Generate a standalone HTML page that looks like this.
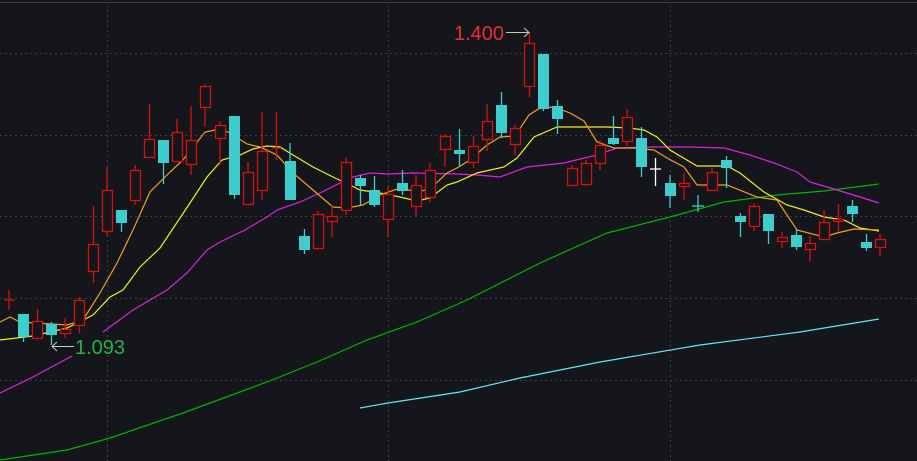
<!DOCTYPE html>
<html><head><meta charset="utf-8"><style>
html,body{margin:0;padding:0;background:#14161b;}
svg{display:block}
</style></head><body>
<svg width="917" height="461" viewBox="0 0 917 461" xmlns="http://www.w3.org/2000/svg">
<rect width="917" height="461" fill="#14161b"/>
<line x1="0" y1="2.5" x2="917" y2="2.5" stroke="#3a3d43" stroke-width="1"/>
<g stroke="#3a3d44" stroke-width="1" stroke-dasharray="2,3">
<line x1="0" y1="53.5" x2="917" y2="53.5"/>
<line x1="0" y1="135.5" x2="917" y2="135.5"/>
<line x1="0" y1="216.5" x2="917" y2="216.5"/>
<line x1="0" y1="298.5" x2="917" y2="298.5"/>
<line x1="0" y1="380.5" x2="917" y2="380.5"/>
<line x1="107.5" y1="5" x2="107.5" y2="461"/>
<line x1="388.5" y1="5" x2="388.5" y2="461"/>
<line x1="670.5" y1="5" x2="670.5" y2="461"/>
</g>
<!-- MA lines -->
<g fill="none" stroke-width="1.2">
<polyline stroke="#00b400" points="0,460 67,450 110,438 183,413 267,382 317,362 367,340 417,322 467,300 540,263 607,233 670,217 724,202 777,195 824,191 879,184"/>
<polyline stroke="#5fe8f0" points="360,408 388,403 460,392 520,378 600,362 700,345 800,332 879,319"/>
<polyline stroke="#e020e0" points="0,393 33,377 72,356"/>
<polyline stroke="#e020e0" points="103,332 133,310 167,290 187,273 207,250 220,242 245,230 267,217 277,210 300,202 320,193 340,183 353,177 370,173 387,174 413,173 457,174 477,175 500,177 527,167 564,163 597,155 617,148 644,147 690,147 724,148 750,155 774,163 797,172 810,182 837,190 860,197 879,203"/>
<polyline stroke="#f0f020" points="0,340 33,336 67,328 83,320 93,315 110,297 123,290 140,267 160,248 172,230 190,203 207,177 222,160 240,155 253,149 267,146 280,147 293,155 313,167 333,177 350,185 360,190 380,193 400,197 417,201 430,198 447,185 457,182 477,173 504,167 517,158 534,137 557,127 574,127 607,127 630,128 644,130 657,137 670,150 697,166 727,166 740,173 764,192 787,205 804,210 824,217 844,220 860,228 879,231"/>
<polyline stroke="#f0a020" points="0,322 10,317 20,322 67,325 83,320 100,293 117,263 133,230 150,192 170,172 183,160 205,132 220,129 230,133 247,144 260,147 277,155 293,173 313,190 333,207 347,208 363,205 380,195 400,188 417,192 430,189 447,173 457,168 470,160 487,145 500,137 515,136 529,115 540,108 554,107 570,113 584,121 597,142 614,148 634,148 654,150 667,158 684,167 697,185 727,185 757,197 777,200 797,230 824,237 837,233 854,229 879,230"/>
</g>
<!-- red candles -->
<g stroke="#d41010" stroke-width="1.3" fill="#14161b">
<line x1="9" y1="290" x2="9" y2="310"/><line x1="4" y1="300" x2="15" y2="300"/>
<line x1="37.5" y1="309" x2="37.5" y2="338"/><rect x="32.5" y="321.5" width="10" height="17"/>
<line x1="65" y1="318" x2="65" y2="338"/><rect x="60.5" y="329.5" width="10" height="4"/>
<line x1="79.5" y1="297" x2="79.5" y2="333"/><rect x="74.5" y="300.5" width="10" height="25"/>
<line x1="93.5" y1="206" x2="93.5" y2="283"/><rect x="88.5" y="244.5" width="10" height="27"/>
<line x1="107" y1="167" x2="107" y2="236"/><rect x="102.5" y="190.5" width="10" height="41"/>
<line x1="135" y1="165" x2="135" y2="205"/><rect x="130.5" y="170.5" width="10" height="30"/>
<line x1="149.5" y1="104" x2="149.5" y2="157"/><rect x="144.5" y="139.5" width="10" height="18"/>
<line x1="177" y1="119" x2="177" y2="161"/><rect x="172.5" y="132.5" width="10" height="29"/>
<line x1="191" y1="106" x2="191" y2="175"/><rect x="186.5" y="140.5" width="10" height="24"/>
<line x1="205" y1="84" x2="205" y2="127"/><rect x="200.5" y="86.5" width="10" height="21"/>
<line x1="220" y1="121" x2="220" y2="165"/><rect x="215.5" y="125.5" width="10" height="13"/>
<line x1="248" y1="162" x2="248" y2="204"/><rect x="243.5" y="172.5" width="10" height="32"/>
<line x1="262" y1="112" x2="262" y2="200"/><rect x="257.5" y="151.5" width="10" height="39"/>
<line x1="276.5" y1="112" x2="276.5" y2="160"/><line x1="272" y1="148" x2="281" y2="148"/>
<line x1="318" y1="211" x2="318" y2="250"/><rect x="313.5" y="214.5" width="10" height="34"/>
<line x1="332" y1="205" x2="332" y2="237"/><rect x="327.5" y="216.5" width="10" height="5"/>
<line x1="346" y1="158" x2="346" y2="215"/><rect x="341.5" y="162.5" width="10" height="48"/>
<line x1="388" y1="186" x2="388" y2="237"/><rect x="383.5" y="194.5" width="10" height="25"/>
<line x1="416" y1="175" x2="416" y2="216"/><rect x="411.5" y="185.5" width="10" height="21"/>
<line x1="430" y1="163" x2="430" y2="202"/><rect x="425.5" y="170.5" width="10" height="27"/>
<line x1="445" y1="134" x2="445" y2="167"/><rect x="440.5" y="136.5" width="10" height="13"/>
<line x1="473.5" y1="136" x2="473.5" y2="168"/><rect x="468.5" y="146.5" width="10" height="16"/>
<line x1="487" y1="104" x2="487" y2="151"/><rect x="482.5" y="121.5" width="10" height="18"/>
<line x1="515" y1="125" x2="515" y2="155"/><rect x="510.5" y="128.5" width="10" height="16"/>
<line x1="529.5" y1="32" x2="529.5" y2="97"/><rect x="524.5" y="43.5" width="10" height="43"/>
<line x1="572" y1="165" x2="572" y2="185"/><rect x="567.5" y="168.5" width="10" height="17"/>
<line x1="586" y1="160" x2="586" y2="186"/><rect x="581.5" y="163.5" width="10" height="21"/>
<line x1="600" y1="140" x2="600" y2="170"/><rect x="595.5" y="145.5" width="10" height="18"/>
<line x1="627" y1="109" x2="627" y2="146"/><rect x="622.5" y="117.5" width="10" height="24"/>
<line x1="684" y1="173" x2="684" y2="200"/><rect x="679.5" y="183.5" width="10" height="3"/>
<line x1="712" y1="168" x2="712" y2="190"/><rect x="707.5" y="172.5" width="10" height="18"/>
<line x1="754" y1="203" x2="754" y2="231"/><rect x="749.5" y="206.5" width="10" height="20"/>
<line x1="782" y1="232" x2="782" y2="248"/><rect x="777.5" y="237.5" width="10" height="4"/>
<line x1="810" y1="236" x2="810" y2="262"/><rect x="805.5" y="243.5" width="10" height="6"/>
<line x1="824" y1="210" x2="824" y2="240"/><rect x="819.5" y="222.5" width="10" height="17"/>
<line x1="838.5" y1="204" x2="838.5" y2="232"/><rect x="833.5" y="219.5" width="10" height="2"/>
<line x1="880" y1="234" x2="880" y2="256"/><rect x="875.5" y="239.5" width="10" height="8"/>
</g>
<!-- cyan candles -->
<g stroke="#3ecccc" stroke-width="1.3" fill="#3ecccc">
<line x1="23.5" y1="314" x2="23.5" y2="342"/><rect x="18" y="314" width="11" height="23" stroke="none"/>
<line x1="51.5" y1="322" x2="51.5" y2="345"/><rect x="46" y="324" width="11" height="11" stroke="none"/>
<line x1="121.5" y1="210" x2="121.5" y2="232"/><rect x="116" y="210" width="11" height="13" stroke="none"/>
<line x1="163.5" y1="140" x2="163.5" y2="184"/><rect x="158" y="140" width="11" height="23" stroke="none"/>
<line x1="234.5" y1="116" x2="234.5" y2="199"/><rect x="229" y="116" width="11" height="79" stroke="none"/>
<line x1="290" y1="143" x2="290" y2="200"/><rect x="285" y="161" width="11" height="39" stroke="none"/>
<line x1="304.5" y1="229" x2="304.5" y2="254"/><rect x="299" y="236" width="11" height="14" stroke="none"/>
<line x1="360.5" y1="175" x2="360.5" y2="205"/><rect x="355" y="178" width="11" height="8" stroke="none"/>
<line x1="374.5" y1="176" x2="374.5" y2="207"/><rect x="369" y="190" width="11" height="15" stroke="none"/>
<line x1="402.5" y1="170" x2="402.5" y2="195"/><rect x="397" y="183" width="11" height="8" stroke="none"/>
<line x1="459.5" y1="129" x2="459.5" y2="167"/><rect x="454" y="150" width="11" height="4" stroke="none"/>
<line x1="501.5" y1="92" x2="501.5" y2="138"/><rect x="496" y="105" width="11" height="28" stroke="none"/>
<line x1="543.5" y1="54" x2="543.5" y2="111"/><rect x="538" y="54" width="11" height="55" stroke="none"/>
<line x1="557.5" y1="100" x2="557.5" y2="134"/><rect x="552" y="106" width="11" height="13" stroke="none"/>
<line x1="613.5" y1="116" x2="613.5" y2="145"/><rect x="608" y="138" width="11" height="6" stroke="none"/>
<line x1="641.5" y1="127" x2="641.5" y2="177"/><rect x="636" y="138" width="11" height="29" stroke="none"/>
<line x1="670" y1="175" x2="670" y2="208"/><rect x="665" y="183" width="11" height="13" stroke="none"/>
<line x1="698" y1="195" x2="698" y2="212"/><line x1="692" y1="206" x2="704" y2="206"/>
<line x1="726.5" y1="156" x2="726.5" y2="188"/><rect x="721" y="160" width="11" height="8" stroke="none"/>
<line x1="740.5" y1="213" x2="740.5" y2="237"/><rect x="735" y="216" width="11" height="6" stroke="none"/>
<line x1="768.5" y1="214" x2="768.5" y2="244"/><rect x="763" y="214" width="11" height="17" stroke="none"/>
<line x1="796.5" y1="229" x2="796.5" y2="250"/><rect x="791" y="235" width="11" height="12" stroke="none"/>
<line x1="852.5" y1="200" x2="852.5" y2="222"/><rect x="847" y="206" width="11" height="8" stroke="none"/>
<line x1="866.5" y1="234" x2="866.5" y2="251"/><rect x="861" y="242" width="11" height="6" stroke="none"/>
</g>
<g stroke="#ffffff" stroke-width="1.3">
<line x1="655.5" y1="158" x2="655.5" y2="186"/><line x1="650" y1="169" x2="661" y2="169"/>
</g>
<!-- labels -->
<text x="454" y="40" font-family="Liberation Sans, sans-serif" font-size="20" fill="#ee2a38">1.400</text>
<g stroke="#c8c8c8" stroke-width="1" fill="none">
<line x1="506" y1="32.5" x2="529" y2="32.5"/><polyline points="524,28 529,32.5 524,37"/>
<line x1="52" y1="346.5" x2="74" y2="346.5"/><polyline points="57,342 52,346.5 57,351"/>
</g>
<text x="75" y="354" font-family="Liberation Sans, sans-serif" font-size="20" fill="#20b44a">1.093</text>
</svg>
</body></html>
